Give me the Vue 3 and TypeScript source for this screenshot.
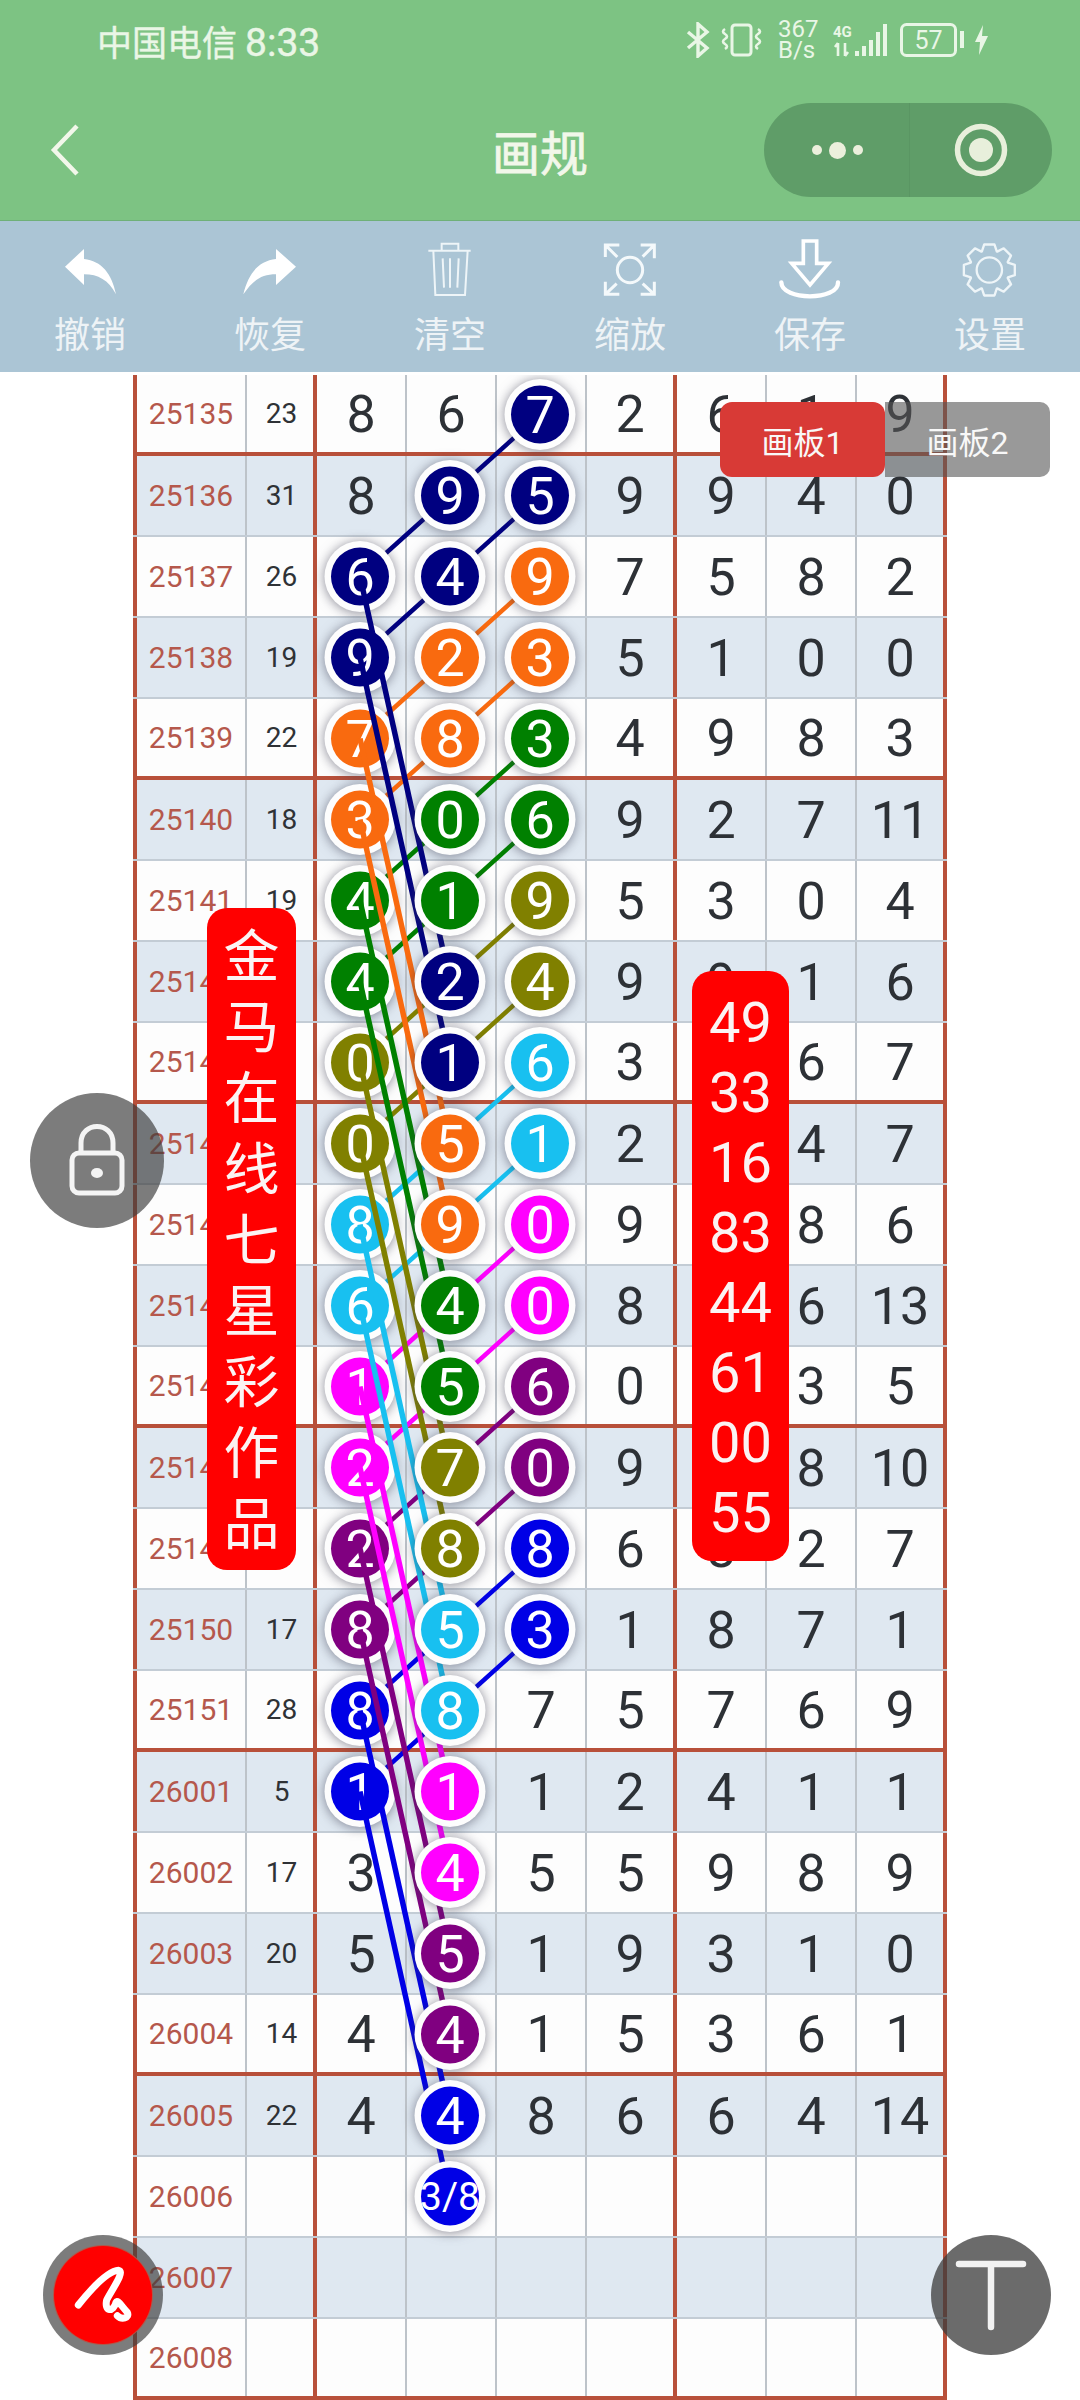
<template>
  <div class="app">
    <header class="top">
      <div class="status">
        <span class="carrier">中国电信<b class="clock">8:33</b></span>
        <div class="status-icons">
          <svg class="ic" width="27" height="36" viewBox="0 0 27 36">
            <path d="M3 10 L22 26 L13 34 V2 L22 10 L3 26" fill="none" stroke="#e9f6e6" stroke-width="3.4" />
          </svg>
          <svg class="ic vib" width="43" height="34" viewBox="0 0 43 34">
            <rect x="12" y="2" width="19" height="30" rx="3" fill="none" stroke="#e9f6e6" stroke-width="3" />
            <path d="M5 6 q-4 2.5 0 5 q4 2.5 0 5 q-4 2.5 0 5 q4 2.5 0 5 M38 6 q4 2.5 0 5 q-4 2.5 0 5 q4 2.5 0 5 q-4 2.5 0 5" fill="none" stroke="#e9f6e6" stroke-width="2.6" />
          </svg>
          <div class="speed"><span>367</span><span>B/s</span></div>
          <svg class="ic sig" width="55" height="34" viewBox="0 0 55 34">
            <text x="0" y="14" class="four-g">4G</text>
            <path d="M5 33 V20 M2 24 L5 20 M12 20 V33 M15 29 L12 33" fill="none" stroke="#e9f6e6" stroke-width="2.6" />
            <rect x="22" y="28" width="4" height="5" fill="#e9f6e6" />
            <rect x="29" y="23" width="4" height="10" fill="#e9f6e6" />
            <rect x="36" y="17" width="4" height="16" fill="#e9f6e6" />
            <rect x="43" y="9" width="4" height="24" fill="#e9f6e6" />
            <rect x="50" y="1" width="4" height="32" fill="#e9f6e6" />
          </svg>
          <svg class="ic bat" width="64" height="34" viewBox="0 0 64 34">
            <rect x="1.5" y="1.5" width="54" height="31" rx="5" fill="none" stroke="#e9f6e6" stroke-width="3" />
            <rect x="60" y="8" width="4" height="17" fill="#e9f6e6" />
            <text x="28.5" y="26" class="bat-num">57</text>
          </svg>
          <svg class="ic bolt" width="13" height="30" viewBox="0 0 13 30">
            <path d="M8 0 L0 17 H5 L4 30 L13 11 H7 Z" fill="#e9f6e6" />
          </svg>
        </div>
      </div>
      <div class="nav">
        <svg class="back" width="30" height="52" viewBox="0 0 30 52">
          <path d="M27 2 L4 26 L27 50" fill="none" stroke="#f2f7ea" stroke-width="4.5" />
        </svg>
        <span class="title">画规</span>
        <div class="capsule">
          <div class="cap-part">
            <i class="dot small"></i><i class="dot"></i><i class="dot small"></i>
          </div>
          <div class="cap-part">
            <svg width="56" height="56" viewBox="0 0 56 56">
              <circle cx="28" cy="28" r="23.5" fill="none" stroke="#e8efdb" stroke-width="5.5" />
              <circle cx="28" cy="28" r="12" fill="#e8efdb" />
            </svg>
          </div>
        </div>
      </div>
    </header>

    <nav class="toolbar">
      <div v-for="tool in tools" :key="tool.label" class="tool">
        <svg class="tool-icon" width="100" height="66" :viewBox="tool.box">
          <template v-if="tool.label === '撤销'">
            <path d="M75 95 L132 42 L132 72 C185 78 215 115 228 178 C205 135 175 118 132 118 L132 150 Z" fill="#fff" />
          </template>
          <template v-else-if="tool.label === '恢复'">
            <path d="M768 95 L708 42 L708 72 C655 78 625 115 610 178 C640 135 665 118 708 118 L708 150 Z" fill="#fff" />
          </template>
          <template v-else-if="tool.label === '清空'">
            <path d="M1165 47 H1292 M1205 45 V26 H1255 V45 M1180 47 L1186 180 H1275 L1283 47 M1208 70 L1212 158 M1230 70 V158 M1256 70 L1252 158" fill="none" stroke="#eef5f8" stroke-width="6" />
          </template>
          <template v-else-if="tool.label === '缩放'">
            <g fill="none" stroke="#f4f9fb" stroke-width="9">
              <circle cx="150" cy="105" r="38" />
              <path d="M76 66 V30 H118 M76 30 L112 66 M182 30 H223 V70 M223 30 L188 65 M76 140 V178 H118 M76 178 L110 146 M223 140 V178 H182 M223 178 L188 146" />
            </g>
          </template>
          <template v-else-if="tool.label === '保存'">
            <path d="M670 18 H710 V85 H745 L690 150 L635 85 H670 Z" fill="none" stroke="#fff" stroke-width="11" />
            <path d="M604 142 C604 198 776 198 774 142" fill="none" stroke="#fff" stroke-width="13" stroke-linecap="round" />
          </template>
          <template v-else>
            <path :d="gearPath" fill="none" stroke="#eef5f8" stroke-width="7" stroke-linejoin="round" />
            <circle cx="1228" cy="105" r="38" fill="none" stroke="#eef5f8" stroke-width="7" />
          </template>
        </svg>
        <span class="tool-label">{{ tool.label }}</span>
      </div>
    </nav>

    <main class="sheet">
      <div
        v-for="(row, r) in rows"
        :key="row.id"
        class="row"
        :class="{ striped: r % 2 === 1, heavy: r % 4 === 0 }"
      >
        <div class="cell id-cell">{{ row.id }}</div>
        <div class="cell sum-cell">{{ row.sum }}</div>
        <div
          v-for="(num, c) in row.nums"
          :key="c"
          class="cell num-cell"
          :class="{ split: c === 3 || c === 6 }"
        >
          {{ isBall(r, c) ? '' : num }}
        </div>
      </div>

      <svg class="balls" width="814" height="2025" viewBox="0 0 814 2025">
        <line
          v-for="(l, i) in diagonals"
          :key="'d' + i"
          :x1="l.x1" :y1="l.y1" :x2="l.x2" :y2="l.y2"
          :stroke="l.color"
          stroke-width="4.5"
        />
        <g v-for="b in firstColBalls" :key="b.key">
          <circle class="halo" :cx="b.x" :cy="b.y" r="35.5" />
          <circle :cx="b.x" :cy="b.y" r="29" :fill="b.color" />
          <text class="ball-num" :x="b.x" :y="b.y" dy="0.355em">{{ b.text }}</text>
        </g>
        <line
          v-for="(l, i) in longLines"
          :key="'l' + i"
          :x1="l.x1" :y1="l.y1" :x2="l.x2" :y2="l.y2"
          :stroke="l.color"
          stroke-width="5.5"
        />
        <g v-for="b in otherBalls" :key="b.key">
          <circle class="halo" :cx="b.x" :cy="b.y" r="35.5" />
          <circle :cx="b.x" :cy="b.y" r="29" :fill="b.color" />
          <text class="ball-num" :class="{ tiny: b.text.length > 1 }" :x="b.x" :y="b.y" dy="0.355em">{{ b.text }}</text>
        </g>
      </svg>
    </main>

    <div class="boards">
      <span class="board active">画板1</span>
      <span class="board">画板2</span>
    </div>

    <div class="banner banner-left">
      <span v-for="ch in '金马在线七星彩作品'" :key="ch">{{ ch }}</span>
    </div>
    <div class="banner banner-right">
      <span v-for="n in picks" :key="n">{{ n }}</span>
    </div>

    <div class="float lock">
      <svg width="60" height="76" viewBox="0 0 60 76">
        <path d="M14 32 V20 C14 -2 46 -2 46 20 V32" fill="none" stroke="#f4f4f4" stroke-width="5" />
        <rect x="5" y="30" width="50" height="40" rx="7" fill="none" stroke="#f4f4f4" stroke-width="5" />
        <ellipse cx="30" cy="50" rx="6" ry="5" fill="#f4f4f4" />
      </svg>
    </div>
    <div class="float pen">
      <div class="pen-disc">
        <svg width="120" height="120" viewBox="39 30 360 360">
          <path d="M145 240 C185 190 235 138 266 136 C285 140 248 190 230 225 C222 262 250 262 258 232 C262 222 272 240 292 262 C300 280 275 285 262 272" fill="none" stroke="#fff" stroke-width="21" stroke-linecap="round" stroke-linejoin="round" />
        </svg>
      </div>
    </div>
    <div class="float text-btn">
      <svg width="72" height="72" viewBox="0 0 72 72">
        <path d="M4 5 H68 M36 5 V68" fill="none" stroke="#f2f2f2" stroke-width="6.5" stroke-linecap="round" />
      </svg>
    </div>
  </div>
</template>

<script setup lang="ts">
import { computed } from 'vue'

interface Row {
  id: string
  sum: string
  nums: string[]
}

interface Line {
  x1: number
  y1: number
  x2: number
  y2: number
  color: string
}

interface Ball {
  key: string
  r: number
  c: number
  x: number
  y: number
  color: string
  text: string
}

const toolNames = ['撤销', '恢复', '清空', '缩放', '保存', '设置']
const toolBoxes = ['0 9 300 198', '540 9 300 198', '1080 9 300 198', '0 9 300 198', '540 9 300 198', '1080 9 300 198']
const tools = toolNames.map((label, i) => ({ label, box: toolBoxes[i] }))

const picks = ['49', '33', '16', '83', '44', '61', '00', '55']

// 一行：期号 和值 七个号码
const raw: [string, string, string][] = [
  ['25135', '23', '8 6 7 2 6 1 9'],
  ['25136', '31', '8 9 5 9 9 4 0'],
  ['25137', '26', '6 4 9 7 5 8 2'],
  ['25138', '19', '9 2 3 5 1 0 0'],
  ['25139', '22', '7 8 3 4 9 8 3'],
  ['25140', '18', '3 0 6 9 2 7 11'],
  ['25141', '19', '4 1 9 5 3 0 4'],
  ['25142', '', '4 2 4 9 9 1 6'],
  ['25143', '', '0 1 6 3 - 6 7'],
  ['25144', '', '0 5 1 2 - 4 7'],
  ['25145', '', '8 9 0 9 - 8 6'],
  ['25146', '', '6 4 0 8 - 6 13'],
  ['25147', '', '1 5 6 0 - 3 5'],
  ['25148', '', '2 7 0 9 - 8 10'],
  ['25149', '', '2 8 8 6 8 2 7'],
  ['25150', '17', '8 5 3 1 8 7 1'],
  ['25151', '28', '8 8 7 5 7 6 9'],
  ['26001', '5', '1 1 1 2 4 1 1'],
  ['26002', '17', '3 4 5 5 9 8 9'],
  ['26003', '20', '5 5 1 9 3 1 0'],
  ['26004', '14', '4 4 1 5 3 6 1'],
  ['26005', '22', '4 4 8 6 6 4 14'],
  ['26006', '', '- 3/8 - - - - -'],
  ['26007', '', '- - - - - - -'],
  ['26008', '', '- - - - - - -'],
]

const rows: Row[] = raw.map(([id, sum, nums]) => ({
  id,
  sum,
  nums: nums.split(' ').map(n => (n === '-' ? '' : n)),
}))

// 每组从第三列的 start 行开始
const groups = [
  { color: '#000080', start: 0 },
  { color: '#f96a0f', start: 2 },
  { color: '#008000', start: 4 },
  { color: '#808000', start: 6 },
  { color: '#18c0f0', start: 8 },
  { color: '#ff00ff', start: 10 },
  { color: '#800080', start: 12 },
  { color: '#0000e6', start: 14 },
]

const colX = [227, 317, 407]
const cellY = (r: number) => 81 * r + 39.5

const ballMap = new Map<string, Ball>()

function addBall(r: number, c: number, color: string) {
  const key = `${r}-${c}`
  // 长线终点的颜色优先，不被后面的组盖掉
  if (!ballMap.has(key)) {
    ballMap.set(key, { key, r, c, x: colX[c], y: cellY(r), color, text: rows[r].nums[c] })
  }
}

groups.forEach(g => {
  addBall(g.start + 7, 1, g.color)
  addBall(g.start + 8, 1, g.color)
})

groups.forEach(g => {
  const s = g.start
  addBall(s, 2, g.color)
  addBall(s + 1, 1, g.color)
  addBall(s + 2, 0, g.color)
  addBall(s + 1, 2, g.color)
  addBall(s + 2, 1, g.color)
  addBall(s + 3, 0, g.color)
})

const balls = [...ballMap.values()]
const firstColBalls = balls.filter(b => b.c === 0)
const otherBalls = balls.filter(b => b.c !== 0)

function isBall(r: number, c: number) {
  return ballMap.has(`${r}-${c}`)
}

function link(r1: number, c1: number, r2: number, c2: number, color: string): Line {
  return { x1: colX[c1], y1: cellY(r1), x2: colX[c2], y2: cellY(r2), color }
}

const diagonals = groups.flatMap(g => {
  const s = g.start
  return [
    link(s, 2, s + 1, 1, g.color),
    link(s + 1, 1, s + 2, 0, g.color),
    link(s + 1, 2, s + 2, 1, g.color),
    link(s + 2, 1, s + 3, 0, g.color),
  ]
})

const longLines = groups.flatMap(g => [
  link(g.start + 2, 0, g.start + 7, 1, g.color),
  link(g.start + 3, 0, g.start + 8, 1, g.color),
])

const gearPath = computed(() => {
  const cx = 1228
  const cy = 105
  const pts: string[] = []
  for (let i = 0; i < 8; i++) {
    const a = (i * Math.PI) / 4 - Math.PI / 2
    for (const [off, rad] of [[-0.38, 60], [-0.2, 78], [0.2, 78], [0.38, 60]]) {
      pts.push(`${(cx + rad * Math.cos(a + off)).toFixed(1)} ${(cy + rad * Math.sin(a + off)).toFixed(1)}`)
    }
  }
  return 'M' + pts.join(' L') + ' Z'
})
</script>

<style>
html,
body {
  margin: 0;
  background: #fff;
}
</style>

<style scoped>
.app {
  position: relative;
  width: 1080px;
  height: 2400px;
  overflow: hidden;
  background: #fff;
  font-family: Roboto, "Noto Sans CJK SC", sans-serif;
}

.top {
  background: #7dc383;
  border-bottom: 1px solid #6fb078;
  height: 221px;
  box-sizing: border-box;
}

.status {
  height: 80px;
  display: flex;
  align-items: center;
  justify-content: space-between;
  padding: 0 92px 0 97px;
}

.carrier {
  font-size: 35px;
  color: #eaf6e6;
  -webkit-text-stroke: 0.4px #eaf6e6;
}

.clock {
  margin-left: 8px;
  font-size: 39px;
  font-weight: 400;
}

.status-icons {
  display: flex;
  align-items: center;
}

.ic {
  display: block;
}

.vib {
  margin-left: 8px;
}

.speed {
  display: flex;
  flex-direction: column;
  margin-left: 15px;
  width: 40px;
  font-size: 24px;
  line-height: 21px;
  color: #e9f6e6;
}

.sig {
  margin-left: 15px;
}

.four-g {
  font-size: 15px;
  font-weight: 700;
  fill: #e9f6e6;
}

.bat {
  margin-left: 12px;
}

.bat-num {
  font-size: 25px;
  text-anchor: middle;
  fill: #e9f6e6;
}

.bolt {
  margin-left: 11px;
}

.nav {
  position: relative;
  height: 140px;
  display: flex;
  align-items: center;
  justify-content: space-between;
  padding: 0 28px 0 50px;
}

.title {
  position: absolute;
  left: 0;
  right: 0;
  text-align: center;
  font-size: 48px;
  color: #f2f7ea;
  -webkit-text-stroke: 0.8px #f2f7ea;
}

.capsule {
  width: 288px;
  height: 94px;
  border-radius: 47px;
  background: #5f9d68;
  display: flex;
}

.cap-part {
  flex: 1;
  display: flex;
  align-items: center;
  justify-content: center;
  gap: 7px;
}

.cap-part:first-child {
  padding-left: 2px;
  border-right: 1px solid #5a9663;
}

.cap-part svg {
  margin-right: 0;
}

.dot {
  display: block;
  width: 17px;
  height: 17px;
  border-radius: 50%;
  background: #ecefdc;
}

.dot.small {
  width: 10px;
  height: 10px;
}

.toolbar {
  height: 151px;
  background: #abc5d5;
  display: flex;
}

.tool {
  width: 180px;
  display: flex;
  flex-direction: column;
  align-items: center;
  padding-top: 17px;
  box-sizing: border-box;
}

.tool-icon {
  display: block;
}

.tool-label {
  margin-top: 10px;
  font-size: 36px;
  line-height: 44px;
  color: #eef3f6;
}

.sheet {
  position: relative;
  margin: 3px 0 0 133px;
  width: 814px;
}

.row {
  display: grid;
  grid-template-columns: 114px 70px repeat(7, 90px);
  height: 81px;
  box-sizing: border-box;
  border-bottom: 2px solid #c3ccd5;
  background: #fdfdfd;
}

.row.striped {
  background: #dfe8f1;
}

.row.heavy {
  border-bottom: 4px solid #b8503a;
}

.cell {
  display: flex;
  align-items: center;
  justify-content: center;
  box-sizing: border-box;
  border-right: 2px solid #bdc3c9;
}

.id-cell {
  border-left: 4px solid #b8503a;
  font-size: 30px;
  color: #b5584c;
}

.sum-cell {
  border-right: 4px solid #b8503a;
  padding-left: 3px;
  font-size: 28px;
  color: #2f3236;
}

.num-cell {
  padding-top: 2px;
  font-size: 52px;
  color: #2d3136;
}

.num-cell.split {
  border-right: 4px solid #b8503a;
}

.balls {
  position: absolute;
  top: 0;
  left: 0;
}

.halo {
  fill: #fdfdfd;
  filter: drop-shadow(0 1px 6px rgba(60, 60, 80, 0.6));
}

.ball-num {
  font-size: 52px;
  fill: #fff;
  text-anchor: middle;
}

.ball-num.tiny {
  font-size: 39px;
}

.boards {
  position: absolute;
  top: 402px;
  left: 720px;
  display: flex;
}

.board {
  width: 165px;
  height: 75px;
  display: flex;
  align-items: center;
  justify-content: center;
  border-radius: 0 10px 10px 0;
  background: rgba(85, 85, 85, 0.6);
  font-size: 32px;
  color: #f8f8f8;
}

.board.active {
  border-radius: 12px;
  background: #d83a36;
}

.banner {
  position: absolute;
  display: flex;
  flex-direction: column;
  align-items: center;
  box-sizing: border-box;
  background: #f00;
  border-radius: 20px;
  color: #fbf3f3;
}

.banner-left {
  top: 908px;
  left: 207px;
  width: 89px;
  height: 662px;
  padding-top: 14px;
  font-size: 56px;
  line-height: 71px;
}

.banner-right {
  top: 971px;
  left: 692px;
  width: 97px;
  height: 590px;
  padding-top: 17px;
  font-size: 56px;
  line-height: 70px;
}

.float {
  position: absolute;
  display: flex;
  align-items: center;
  justify-content: center;
  border-radius: 50%;
}

.lock {
  left: 30px;
  top: 1093px;
  width: 134px;
  height: 135px;
  background: rgba(60, 60, 60, 0.67);
}

.pen {
  left: 43px;
  top: 2235px;
  width: 120px;
  height: 120px;
  background: rgba(60, 60, 60, 0.67);
}

.pen-disc {
  position: relative;
  width: 98px;
  height: 98px;
  border-radius: 50%;
  background: #f00;
  box-shadow: 0 0 0 1px #b0584a;
}

.pen-disc svg {
  position: absolute;
  left: -11px;
  top: -11px;
}

.text-btn {
  left: 931px;
  top: 2235px;
  width: 120px;
  height: 120px;
  background: rgba(60, 60, 60, 0.76);
}
</style>
